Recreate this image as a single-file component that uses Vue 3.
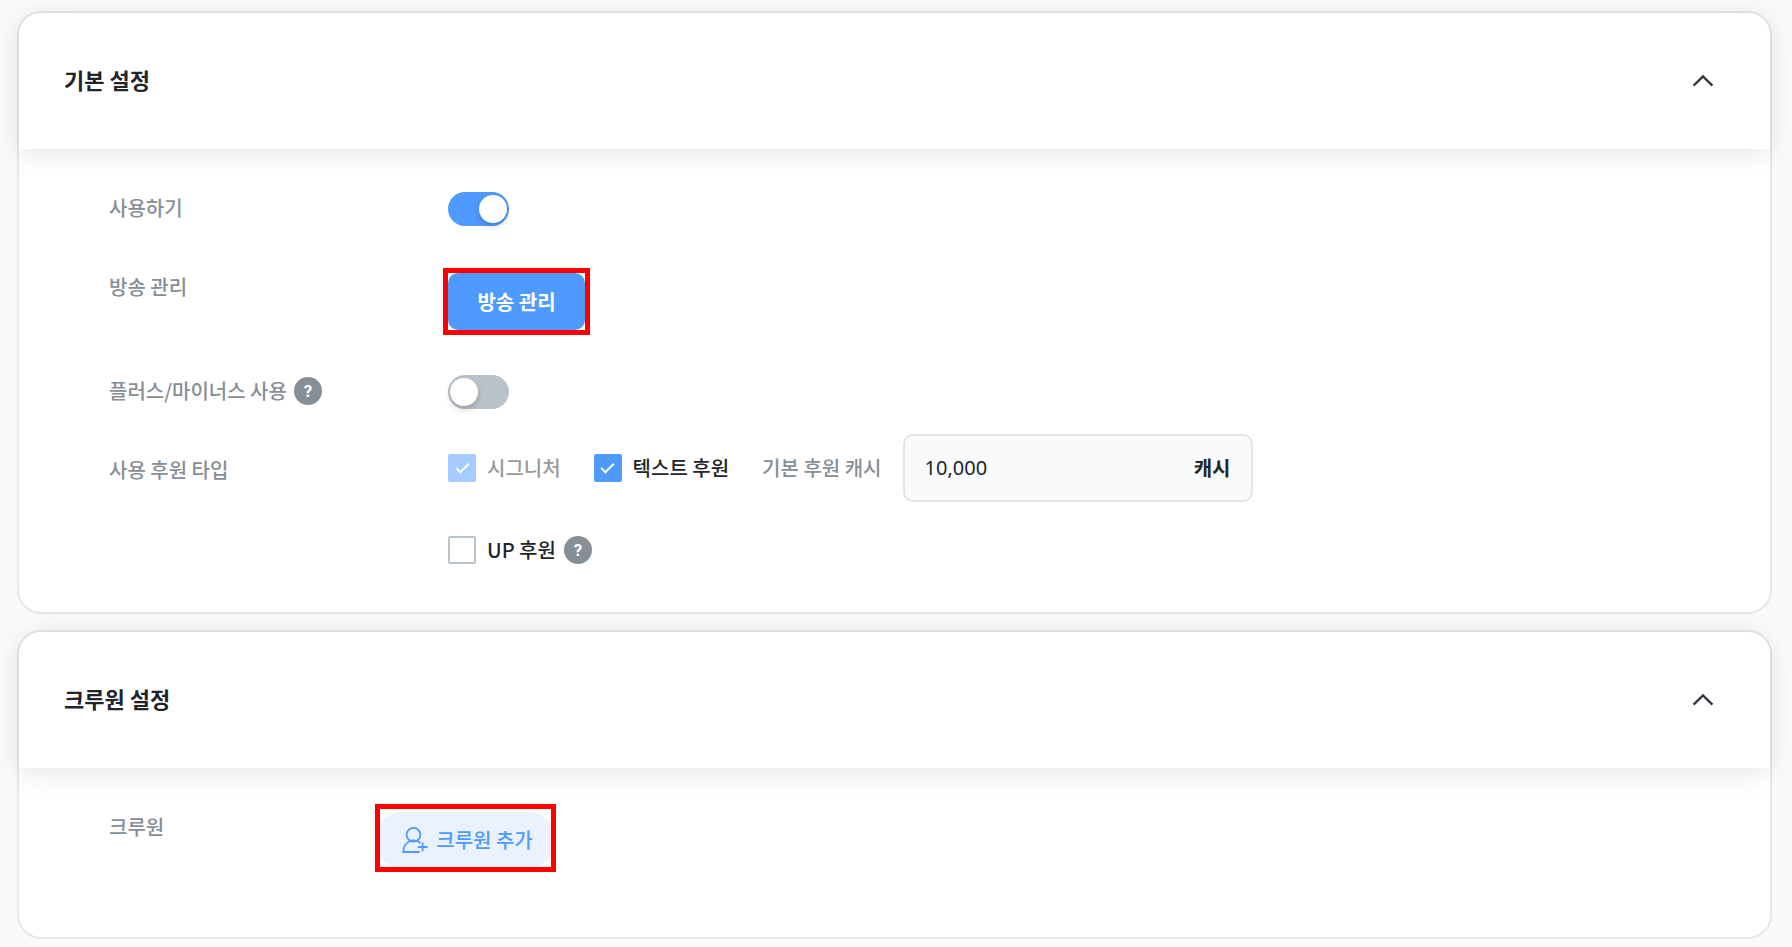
<template>
  <main class="page">
    <section class="card">
      <header class="card-header">
        <h2 class="title">기본 설정</h2>
        <button class="collapse" type="button" aria-label="접기">
          <svg width="24" height="24" viewBox="0 0 24 24" fill="none">
            <path d="M2.6 16.6 12 7.4l9.4 9.2" stroke="#343a40" stroke-width="2.4" />
          </svg>
        </button>
      </header>

      <div class="card-body">
        <div class="row">
          <label class="label" for="use">사용하기</label>
          <input id="use" v-model="form.use" class="switch" type="checkbox" />
        </div>

        <div class="row">
          <span class="label">방송 관리</span>
          <div class="marked marked-manage">
            <button class="manage" type="button">방송 관리</button>
          </div>
        </div>

        <div class="row">
          <div class="label">
            <label for="plus-minus">플러스/마이너스 사용</label>
            <button class="help" type="button">?</button>
          </div>
          <input id="plus-minus" v-model="form.plusMinus" class="switch" type="checkbox" />
        </div>

        <div class="row">
          <span class="label">사용 후원 타입</span>
          <div class="types">
            <div class="line">
              <label class="check disabled">
                <input v-model="form.signature" type="checkbox" disabled />
                시그니처
              </label>
              <label class="check">
                <input v-model="form.text" type="checkbox" />
                텍스트 후원
              </label>
              <div class="cash">
                <label class="cash-label" for="cash">기본 후원 캐시</label>
                <div class="field">
                  <input id="cash" v-model="form.cash" class="field-input" type="text" />
                  <span class="unit">캐시</span>
                </div>
              </div>
            </div>
            <div class="line line-up">
              <label class="check">
                <input v-model="form.up" type="checkbox" />
                UP 후원
              </label>
              <button class="help" type="button">?</button>
            </div>
          </div>
        </div>
      </div>
    </section>

    <section class="card">
      <header class="card-header">
        <h2 class="title">크루원 설정</h2>
        <button class="collapse" type="button" aria-label="접기">
          <svg width="24" height="24" viewBox="0 0 24 24" fill="none">
            <path d="M2.6 16.6 12 7.4l9.4 9.2" stroke="#343a40" stroke-width="2.4" />
          </svg>
        </button>
      </header>

      <div class="card-body crew-body">
        <div class="row crew-row">
          <span class="label">크루원</span>
          <div class="marked marked-crew">
            <button class="add-crew" type="button">
              <svg width="26" height="28" viewBox="0 0 26 28" fill="none" stroke="#4f9aff" stroke-width="1.8">
                <circle cx="11.5" cy="8.8" r="6.9" />
                <path d="M17.6 26H1.2c.2-5.4 2.6-9 6.4-10.8 2.4-1 5.4-1 7.8 0 1.2.5 2.2 1.2 3 2" />
                <path d="M20.6 16.4v9.2M15.8 21h9.8" />
              </svg>
              크루원 추가
            </button>
          </div>
        </div>
      </div>
    </section>
  </main>
</template>

<script setup>
import { reactive } from "vue";

const form = reactive({
  use: true,
  plusMinus: false,
  signature: true,
  text: true,
  up: false,
  cash: "10,000",
});
</script>

<style>
body {
  background: #f9fafc;
}
</style>

<style scoped>
.page {
  display: flex;
  flex-direction: column;
  gap: 16px;
  padding: 11px 20px 9px 17px;
  font-family: "Noto Sans CJK KR", sans-serif;
  font-size: 20px;
  line-height: 34px;
  color: #212529;
}
button,
input {
  margin: 0;
  font: inherit;
  color: inherit;
}
button {
  border: none;
  padding: 0;
  cursor: pointer;
}
.card {
  background: #fff;
  border: 2px solid #e6e7e7;
  border-radius: 24px;
}
.card-header {
  display: flex;
  align-items: center;
  justify-content: space-between;
  height: 136px;
  padding: 0 55px 0 45px;
  box-sizing: border-box;
  background: #fff;
  border-radius: 22px 22px 0 0;
  box-shadow: 0 4px 28px rgba(0, 0, 0, 0.11);
}
.title {
  margin: 0;
  padding-bottom: 4px;
  font-size: 22px;
  font-weight: 700;
}
.collapse {
  display: flex;
  background: none;
}
.card-body {
  display: flex;
  flex-direction: column;
  gap: 45px;
  padding: 43px 90px 45px;
}
.row {
  display: grid;
  grid-template-columns: 339px 1fr;
  align-items: start;
  justify-items: start;
}
.label {
  display: flex;
  align-items: center;
  gap: 7px;
  font-weight: 500;
  line-height: 32px;
  color: #868e96;
}
.help {
  width: 28px;
  height: 28px;
  border-radius: 50%;
  background: #868e96;
  color: #fff;
  font-family: Roboto, sans-serif;
  font-size: 17px;
  font-weight: 700;
  line-height: 28px;
}
.switch {
  appearance: none;
  width: 61px;
  height: 34px;
  padding: 3px 2px;
  box-sizing: border-box;
  border-radius: 17px;
  background: #bac2ca;
  display: flex;
}
.switch::before {
  content: "";
  width: 28px;
  height: 28px;
  border-radius: 50%;
  background: #fff;
  box-shadow: 0 3px 6px rgba(0, 0, 0, 0.2);
}
.switch:checked {
  background: #4f9aff;
  justify-content: flex-end;
}
.marked {
  position: relative;
  display: flex;
}
/* red highlight frame laid over the button */
.marked::after {
  content: "";
  position: absolute;
  border: 5px solid #f00;
  pointer-events: none;
}
.marked-manage {
  margin-top: 2px;
}
.marked-manage::after {
  inset: -5px;
}
.manage {
  width: 137px;
  height: 57px;
  border-radius: 10px;
  background: #4f9aff;
  color: #fff;
  font-weight: 700;
}
.types {
  display: flex;
  flex-direction: column;
  gap: 31px;
  margin-top: -20px;
}
.line {
  display: flex;
  align-items: center;
  gap: 33px;
}
.line-up {
  gap: 8px;
}
.check {
  display: flex;
  align-items: center;
  gap: 11px;
  font-weight: 500;
}
.check input {
  appearance: none;
  display: flex;
  justify-content: center;
  width: 28px;
  height: 28px;
  box-sizing: border-box;
  border: 2px solid #bac2ca;
  border-radius: 2px;
  background: #fff;
}
.check input:checked {
  background: #4f9aff;
  border-color: #4f9aff;
}
.check input:checked::before {
  content: "";
  width: 5px;
  height: 11px;
  margin-top: 4px;
  border: solid #fff;
  border-width: 0 2px 2px 0;
  transform: rotate(45deg);
}
.check.disabled {
  color: #999;
}
.check.disabled input {
  opacity: 0.5;
}
.cash {
  display: flex;
  align-items: center;
  gap: 21px;
}
.cash-label {
  font-weight: 500;
  color: #868e96;
}
.field {
  display: flex;
  align-items: center;
  width: 350px;
  height: 68px;
  padding: 0 20px;
  box-sizing: border-box;
  border: 2px solid #e3e4e6;
  border-radius: 10px;
  background: #f9fafc;
}
.field-input {
  flex: 1;
  min-width: 0;
  padding: 0;
  border: none;
  outline: none;
  background: none;
  font-family: "Noto Sans", "Noto Sans CJK KR", sans-serif;
}
.unit {
  font-weight: 700;
}
.crew-row {
  grid-template-columns: 266px 1fr;
}
.crew-body {
  padding-bottom: 69px;
}
.marked-crew {
  margin-top: 1px;
}
.marked-crew::after {
  inset: -8px 0 -4px;
}
.add-crew {
  display: flex;
  align-items: center;
  justify-content: center;
  gap: 8px;
  width: 181px;
  height: 56px;
  padding-left: 4px;
  border-radius: 28px;
  background: #eaf2ff;
  color: #4f9aff;
  font-weight: 500;
}
</style>
